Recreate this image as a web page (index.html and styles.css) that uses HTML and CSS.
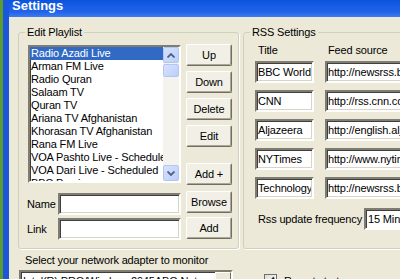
FILE: index.html
```html
<!DOCTYPE html>
<html lang="en">
<head>
    <meta charset="UTF-8">
    <title>Settings</title>
    <link rel="stylesheet" href="styles.css">
</head>
<body>
    <div class="window">
        <div class="titlebar">Settings</div>
        <div class="dialog">
            <div class="groups">
                <fieldset class="group playlist">
                    <legend>Edit Playlist</legend>
                    <div class="playlist-left">
                        <div class="listbox">
                            <ul class="items">
                                <li class="selected">Radio Azadi Live</li>
                                <li>Arman FM Live</li>
                                <li>Radio Quran</li>
                                <li>Salaam TV</li>
                                <li>Quran TV</li>
                                <li>Ariana TV Afghanistan</li>
                                <li>Khorasan TV Afghanistan</li>
                                <li>Rana FM Live</li>
                                <li>VOA Pashto Live - Scheduled</li>
                                <li>VOA Dari Live - Scheduled</li>
                                <li>BBC Persian</li>
                            </ul>
                            <div class="scroll">
                                <div class="arrow">
                                    <svg width="8" height="5" viewBox="0 0 8 5"><polyline points="0.5,4.5 4,1 7.5,4.5" fill="none" stroke="#4d6185" stroke-width="1.8"/></svg>
                                </div>
                                <div class="thumb"></div>
                                <div class="track"></div>
                                <div class="arrow">
                                    <svg width="8" height="5" viewBox="0 0 8 5"><polyline points="0.5,0.5 4,4 7.5,0.5" fill="none" stroke="#4d6185" stroke-width="1.8"/></svg>
                                </div>
                            </div>
                        </div>
                        <div class="field name-row">
                            <label>Name</label>
                            <input type="text" class="textbox">
                        </div>
                        <div class="field link-row">
                            <label>Link</label>
                            <input type="text" class="textbox">
                        </div>
                    </div>
                    <div class="playlist-buttons">
                        <button class="btn btn-up">Up</button>
                        <button class="btn">Down</button>
                        <button class="btn">Delete</button>
                        <button class="btn">Edit</button>
                        <button class="btn btn-addplus">Add +</button>
                        <button class="btn btn-browse">Browse</button>
                        <button class="btn btn-add">Add</button>
                    </div>
                </fieldset>

                <fieldset class="group rss">
                    <legend>RSS Settings</legend>
                    <div class="rss-head">
                        <span class="col-title">Title</span>
                        <span>Feed source</span>
                    </div>
                    <div class="rss-rows">
                        <input type="text" class="textbox" value="BBC World">
                        <input type="text" class="textbox" value="http://newsrss.bbc.co.uk/rss/newsonline_world_edition/front_page/rss.xml">
                        <input type="text" class="textbox" value="CNN">
                        <input type="text" class="textbox" value="http://rss.cnn.com/rss/edition.rss">
                        <input type="text" class="textbox" value="Aljazeera">
                        <input type="text" class="textbox" value="http://english.aljazeera.net/Services/Rss/">
                        <input type="text" class="textbox" value="NYTimes">
                        <input type="text" class="textbox" value="http://www.nytimes.com/services/xml/rss/nyt/HomePage.xml">
                        <input type="text" class="textbox" value="Technology">
                        <input type="text" class="textbox" value="http://newsrss.bbc.co.uk/rss/newsonline_world_edition/technology/rss.xml">
                    </div>
                    <div class="freq">
                        <span class="freq-label">Rss update frequency</span>
                        <div class="combo combo-freq">
                            <span class="combo-text">15 Minutes</span>
                        </div>
                    </div>
                </fieldset>
            </div>

            <div class="bottom">
                <div class="adapter">
                    <div class="adapter-label">Select your network adapter to monitor</div>
                    <div class="combo">
                        <span class="combo-text">Intel(R) PRO/Wireless 2945ABG Network Connection</span>
                        <span class="combo-btn">
                            <svg width="7" height="4" viewBox="0 0 7 4"><polygon points="0,0 7,0 3.5,4" fill="#000"/></svg>
                        </span>
                    </div>
                </div>
                <label class="startup">
                    <span class="checkbox">
                        <svg width="9" height="9" viewBox="0 0 9 9"><polyline points="1,4 3.5,6.5 8,1.5" fill="none" stroke="#222" stroke-width="2"/></svg>
                    </span>
                    Run at startup
                </label>
            </div>
        </div>
    </div>
</body>
</html>
```

FILE: styles.css
```css
html, body {
    margin: 0;
    height: 100%;
    overflow: hidden;
}
body {
    background-color: #5c9c2e; /* desktop */
    font-family: "Liberation Sans", Arial, sans-serif;
    font-size: 11px;
    letter-spacing: -0.15px; /* tahoma is a bit narrower */
    color: #000;
}
.window {
    margin-left: 3px;
    width: 500px;
    height: 320px;
    border-left: 6px solid #1a57dc;
    background-color: #ece9d8;
}
.titlebar {
    height: 17px;
    padding-left: 3px;
    background: linear-gradient(#0b53de, #2164e8 70%, #3d7bf0);
    color: #fff;
    font-size: 13px;
    font-weight: bold;
    line-height: 12px;
    letter-spacing: 0;
}
.dialog {
    padding: 9px 0 0 9px;
}
.groups {
    display: flex;
    gap: 4px;
}
.group {
    flex-shrink: 0;
    margin: 0;
    min-width: 0;
    border: 1px solid #d0d0bf;
    border-radius: 3px;
    box-shadow: 1px 1px 0 #fff;
}
.group legend {
    padding: 0 2px;
    line-height: 13px;
}

/* edit playlist */
.playlist {
    box-sizing: border-box;
    width: 221px;
    padding: 6px 6px 8px 9px;
    display: flex;
    gap: 5px;
}
.playlist legend {
    margin-left: -3px;
}
.playlist-left {
    width: 153px;
    flex-shrink: 0;
    display: flex;
    flex-direction: column;
}
.listbox {
    box-sizing: border-box;
    height: 138px;
    display: flex;
    background-color: #fff;
    border: 2px solid;
    border-color: #7f7d72 #fff #fff #7f7d72;
    box-shadow: inset 1px 1px 0 #3f3f3f;
}
.items {
    flex: 1;
    min-width: 0;
    margin: 0;
    padding: 0;
    list-style: none;
    overflow: hidden;
    white-space: nowrap;
}
.items li {
    height: 13px;
    line-height: 13px;
    padding-left: 1px;
}
.items li.selected {
    background-color: #316ac5;
    color: #fff;
}
.scroll {
    width: 16px;
    flex-shrink: 0;
    display: flex;
    flex-direction: column;
    background-color: #f4f3ee;
}
.arrow, .thumb {
    box-sizing: border-box;
    height: 16px;
    display: flex;
    align-items: center;
    justify-content: center;
    background: linear-gradient(135deg, #d6e2fd, #bccffa);
    border: 1px solid #b3c6f2;
    border-radius: 2px;
}
.thumb {
    height: 13px;
    margin-top: 1px;
}
.track {
    flex: 1;
}
.field {
    display: flex;
    align-items: center;
}
.field label {
    width: 31px;
    margin-left: -1px;
}
.field .textbox {
    flex: 1;
}
.name-row {
    margin-top: 10px;
    height: 21px;
}
.link-row {
    margin-top: 4px;
    height: 22px;
}
.textbox {
    box-sizing: border-box;
    height: 22px;
    min-width: 0;
    margin: 0;
    padding: 0 1px;
    font: inherit;
    letter-spacing: inherit;
    color: #000;
    background-color: #fff;
    border: 2px solid;
    border-color: #7f7d72 #fff #fff #7f7d72;
    box-shadow: inset 1px 1px 0 #3f3f3f, inset -1px -1px 0 #d8d5c6;
    outline: none;
}
.playlist-buttons {
    width: 46px;
    flex-shrink: 0;
    display: flex;
    flex-direction: column;
    gap: 5px;
}
.btn {
    box-sizing: border-box;
    height: 22px;
    padding: 0;
    font: inherit;
    letter-spacing: inherit;
    color: #000;
    background-color: #f2f0e6;
    border: 1px solid;
    border-color: #fff #716f64 #716f64 #fff;
    border-radius: 2px;
    box-shadow: inset -1px -1px 0 #aca899;
}
.btn-up {
    margin-top: -1px;
}
.btn-addplus {
    margin-top: 11px;
}
.btn-browse {
    margin-top: 1px;
}
.btn-add {
    margin-top: -1px;
}

/* rss settings */
.rss {
    width: 230px;
    padding: 5px 0 8px 11px;
}
.rss legend {
    margin-left: -5px;
}
.rss-head {
    display: flex;
    height: 13px;
    line-height: 13px;
    margin-bottom: 4px;
    white-space: nowrap;
}
.rss-head span {
    padding-left: 3px;
}
.rss-head .col-title {
    width: 67px;
}
.rss-rows {
    display: grid;
    grid-template-columns: 59px 170px;
    column-gap: 11px;
    row-gap: 7px;
}
.rss-rows .textbox {
    width: 100%;
    padding-left: 1px;
}
.freq {
    display: flex;
    align-items: center;
    margin-top: 9px;
    white-space: nowrap;
}
.freq-label {
    width: 106px;
    flex-shrink: 0;
    padding-left: 3px;
}
.combo {
    box-sizing: border-box;
    height: 22px;
    display: flex;
    align-items: center;
    background-color: #fff;
    border: 2px solid;
    border-color: #7f7d72 #fff #fff #7f7d72;
    box-shadow: inset 1px 1px 0 #3f3f3f;
    overflow: hidden;
    white-space: nowrap;
}
.combo-freq {
    width: 80px;
}
.combo-text {
    flex: 1;
    min-width: 0;
    padding-left: 2px;
    overflow: hidden;
}
.combo-btn {
    box-sizing: border-box;
    width: 16px;
    height: 18px;
    flex-shrink: 0;
    display: flex;
    align-items: center;
    justify-content: center;
    background-color: #ece9d8;
    border: 1px solid;
    border-color: #fff #716f64 #716f64 #fff;
}

/* bottom */
.bottom {
    display: flex;
    margin-top: 5px;
}
.adapter {
    width: 214px;
    flex-shrink: 0;
    margin-left: 1px;
}
.adapter-label {
    line-height: 13px;
    padding-left: 6px;
    margin-bottom: 3px;
    white-space: nowrap;
}
.startup {
    display: flex;
    align-items: center;
    gap: 7px;
    height: 13px;
    margin: 20px 0 0 31px;
    white-space: nowrap;
}
.checkbox {
    box-sizing: border-box;
    width: 13px;
    height: 13px;
    display: flex;
    align-items: center;
    justify-content: center;
    background: linear-gradient(135deg, #dcdcd7, #fff);
    border: 1px solid #6f6f6f;
}
```
